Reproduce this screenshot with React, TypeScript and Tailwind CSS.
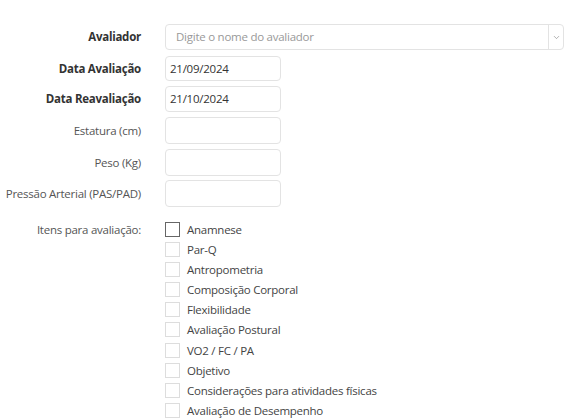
import { ChevronDown } from "lucide-react";

const items = [
  "Anamnese",
  "Par-Q",
  "Antropometria",
  "Composição Corporal",
  "Flexibilidade",
  "Avaliação Postural",
  "VO2 / FC / PA",
  "Objetivo",
  "Considerações para atividades físicas",
  "Avaliação de Desempenho",
];

function Label({ text, bold }: { text: string; bold?: boolean }) {
  return (
    <div
      className={`w-[141px] shrink-0 whitespace-nowrap text-right ${
        bold ? "font-bold text-[#333]" : "text-[#555]"
      }`}
    >
      {text}
    </div>
  );
}

function TextRow({
  label,
  bold,
  value,
  h,
  mb,
}: {
  label: string;
  bold?: boolean;
  value?: string;
  h: string;
  mb: string;
}) {
  return (
    <div className={`flex items-center gap-[24px] ${mb}`}>
      <Label text={label} bold={bold} />
      <div
        className={`flex w-[116px] items-center rounded-[4px] border border-[#e3e3e3] bg-white px-[4px] text-[#333] ${h}`}
      >
        {value}
      </div>
    </div>
  );
}

export default function App() {
  return (
    <div
      className="min-h-[419px] w-[588px] bg-white pt-[24px] text-[11.5px] tracking-[-0.25px]"
      style={{ fontFamily: '"Open Sans", "Noto Sans", sans-serif' }}
    >
      <div className="mb-[6px] flex items-center gap-[24px]">
        <Label text="Avaliador" bold />
        <div className="flex h-[26px] w-[399px] items-center rounded-[4px] border border-[#e3e3e3] bg-white">
          <div className="flex-1 px-[10px] text-[#999]">Digite o nome do avaliador</div>
          <div className="flex h-full w-[15px] items-center justify-center border-l border-[#e3e3e3]">
            <ChevronDown size={9} strokeWidth={1.5} className="text-[#777]" />
          </div>
        </div>
      </div>
      <TextRow label="Data Avaliação" bold value="21/09/2024" h="h-[25px]" mb="mb-[5px]" />
      <TextRow label="Data Reavaliação" bold value="21/10/2024" h="h-[26px]" mb="mb-[5px]" />
      <TextRow label="Estatura (cm)" h="h-[27px]" mb="mb-[5px]" />
      <TextRow label="Peso (Kg)" h="h-[27px]" mb="mb-[4px]" />
      <TextRow label="Pressão Arterial (PAS/PAD)" h="h-[27px]" mb="mb-[15px]" />

      <div className="flex items-start gap-[24px]">
        <div className="w-[141px] shrink-0 whitespace-nowrap pt-[0px] text-right leading-[15px] text-[#555]">
          Itens para avaliação:
        </div>
        <div className="flex flex-col">
          {items.map((item, i) => (
            <div key={item} className="flex h-[20.1px] items-start gap-[7px]">
              <div
                className={`h-[15px] w-[15px] border ${
                  i === 0 ? "border-[#666]" : "border-[#ddd]"
                } bg-white`}
              />
              <div className="leading-[15px] text-[#444]">{item}</div>
            </div>
          ))}
        </div>
      </div>
    </div>
  );
}
